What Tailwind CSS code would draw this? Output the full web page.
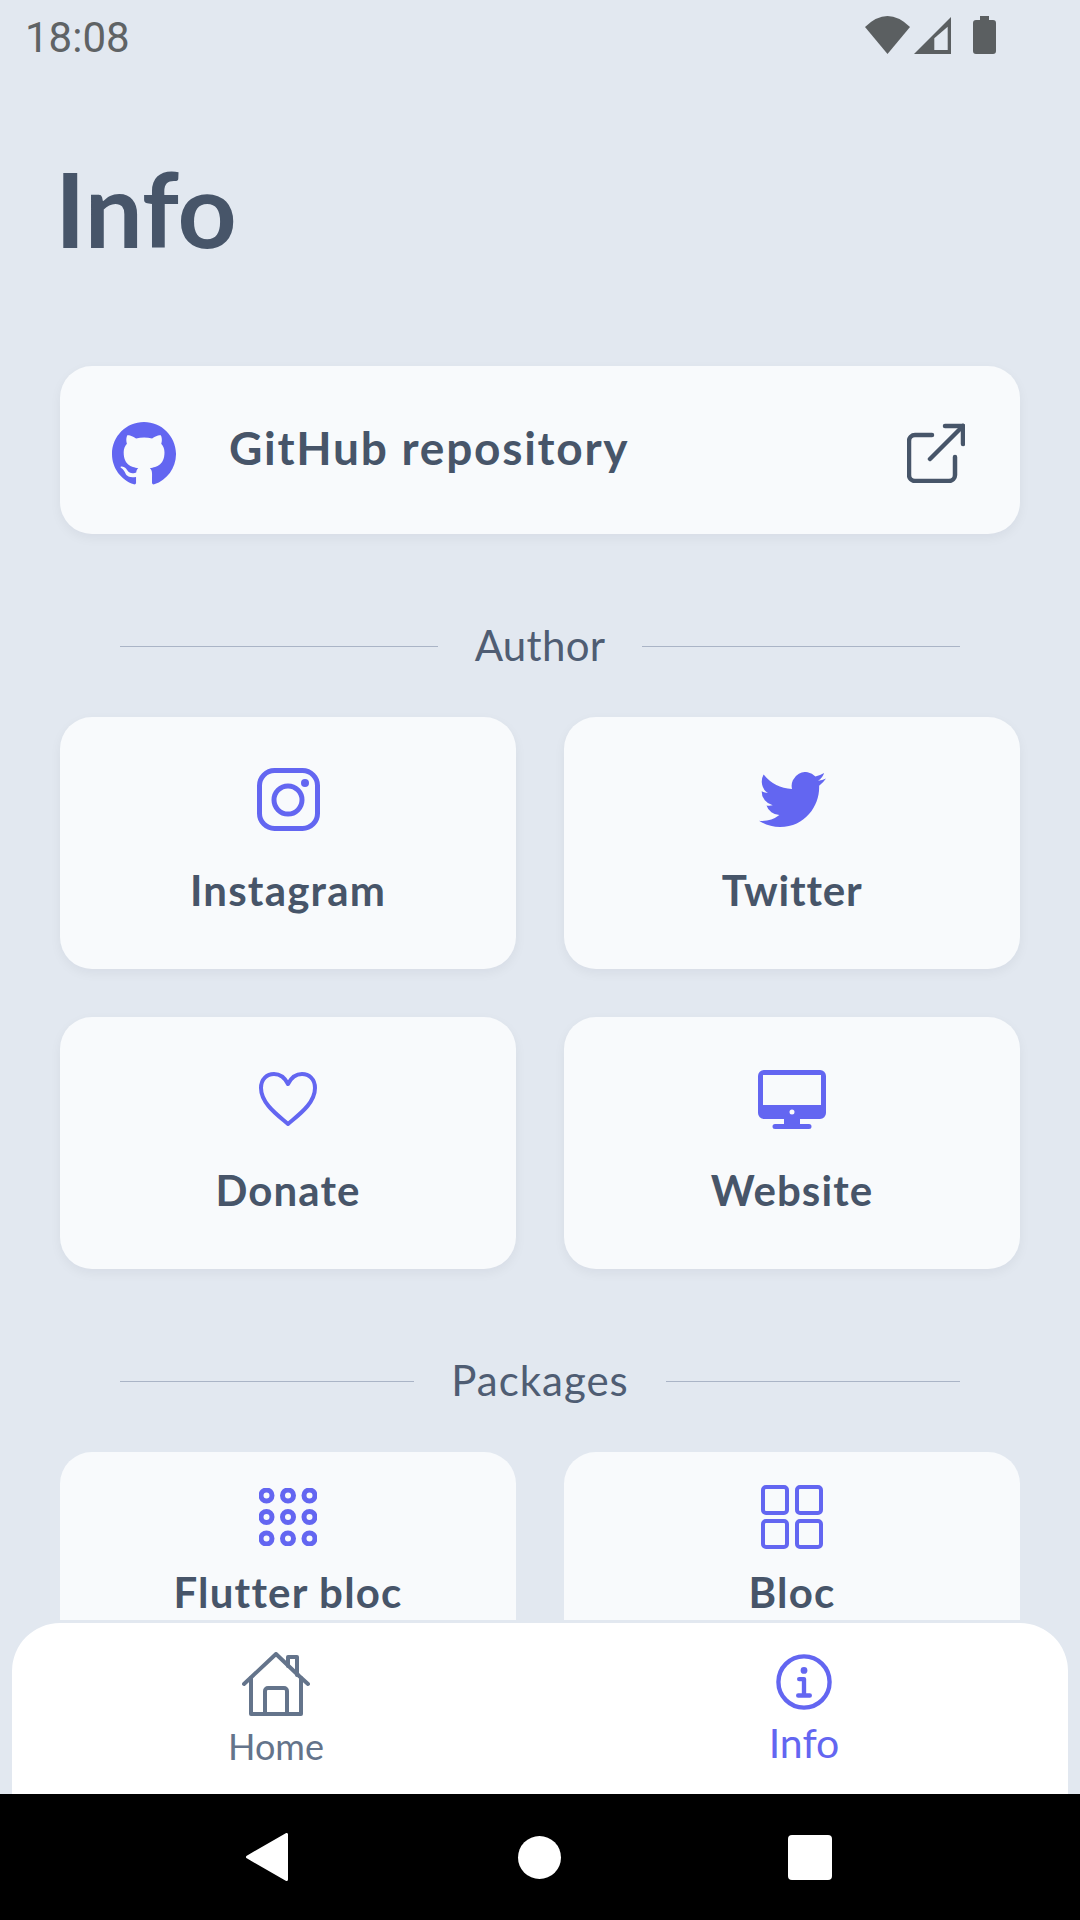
<!DOCTYPE html>
<html lang="en">
<head>
    <meta charset="UTF-8">
    <meta name="viewport" content="width=device-width, initial-scale=1.0">
    <title>Info</title>
    <script src="https://cdn.jsdelivr.net/npm/@tailwindcss/browser@4"></script>
</head>
<body class="bg-[#e2e8f0]">
<div class="w-[1080px] h-[1920px] flex flex-col overflow-hidden bg-[#e2e8f0] font-['Lato','Noto_Sans',sans-serif] text-[#475569]">

    <!-- status bar -->
    <div class="h-[72px] shrink-0 flex justify-between pl-[25px] pr-[84px] pt-[14px]">
        <span class="font-['Roboto',sans-serif] text-[42px] leading-[48px] text-[#5f6365]">18:08</span>
        <div class="flex items-start pt-[2px]">
            <svg width="45" height="38" viewBox="0 0 45 38" fill="#5b5f61"><path d="M22.5 38 0 11Q22.5-11 45 11Z"/></svg>
            <svg class="ml-[4px] mt-[1px]" width="37" height="37" viewBox="0 0 37 37"><path fill="#5b5f61" d="M0 37 37 0V37Z"/><path fill="#e2e8f0" d="M20.3 21.3 33.7 9.7V33H20.3Z"/></svg>
            <svg class="ml-[22px]" width="23" height="38" viewBox="0 0 23 38" fill="#5b5f61"><path d="M7 0h9v4h4a3 3 0 0 1 3 3v28a3 3 0 0 1-3 3H3a3 3 0 0 1-3-3V7a3 3 0 0 1 3-3h4Z"/></svg>
        </div>
    </div>

    <!-- scrolling content, cut off just above the nav -->
    <div class="h-[1548px] shrink-0 overflow-hidden px-[60px]">
        <h1 class="mt-[86px] -ml-[5px] h-[85px] text-[103px] leading-[100px] font-bold">Info</h1>

        <div class="mt-[123px] h-[168px] rounded-[32px] bg-[#f8fafc] shadow-[0_4px_12px_rgba(15,23,42,0.05)] flex items-center pl-[52px] pr-[55px]">
            <svg class="mt-[7px]" width="64" height="64" viewBox="2 2 20 20" fill="#6366f1"><path d="M12.001 2C6.47598 2 2.00098 6.475 2.00098 12C2.00098 16.425 4.86348 20.1625 8.83848 21.4875C9.33848 21.575 9.52598 21.275 9.52598 21.0125C9.52598 20.775 9.51348 19.9875 9.51348 19.15C7.00098 19.6125 6.35098 18.5375 6.15098 17.975C6.03848 17.6875 5.55098 16.8 5.12598 16.5625C4.77598 16.375 4.27598 15.9125 5.11348 15.9C5.90098 15.8875 6.46348 16.625 6.65098 16.925C7.55098 18.4375 8.98848 18.0125 9.56348 17.75C9.65098 17.1 9.91348 16.6625 10.201 16.4125C7.97598 16.1625 5.65098 15.3 5.65098 11.475C5.65098 10.3875 6.03848 9.4875 6.67598 8.7875C6.57598 8.5375 6.22598 7.5125 6.77598 6.1375C6.77598 6.1375 7.61348 5.875 9.52598 7.1625C10.326 6.9375 11.176 6.825 12.026 6.825C12.876 6.825 13.726 6.9375 14.526 7.1625C16.4385 5.8625 17.276 6.1375 17.276 6.1375C17.826 7.5125 17.476 8.5375 17.376 8.7875C18.0135 9.4875 18.401 10.375 18.401 11.475C18.401 15.3125 16.0635 16.1625 13.8385 16.4125C14.201 16.725 14.5135 17.325 14.5135 18.2625C14.5135 19.6 14.501 20.675 14.501 21.0125C14.501 21.275 14.6885 21.5875 15.1885 21.4875C19.259 20.1133 21.9999 16.2963 22.001 12C22.001 6.475 17.526 2 12.001 2Z"/></svg>
            <span class="ml-[53px] flex-1 text-[46px] leading-[50px] tracking-[1.75px] font-bold mb-[4px]">GitHub repository</span>
            <svg class="mt-[6px]" width="58" height="60" viewBox="0 0 58 60" fill="none" stroke="#475569" stroke-width="4.5" stroke-linecap="round" stroke-linejoin="round"><path d="M25 12H8a6 6 0 0 0-6 6v34a6 6 0 0 0 6 6h34a6 6 0 0 0 6-6V34"/><path d="M23 36 56 3"/><path d="M38 3h18v18"/></svg>
        </div>

        <!-- Author -->
        <div class="mt-[89px] mx-[60px] flex items-center justify-between h-[46px]">
            <div class="w-[318px] h-px bg-[#aab4c6]"></div>
            <span class="text-[42px] leading-[46px] tracking-[0.3px] text-[#4f5d73] -translate-y-px">Author</span>
            <div class="w-[318px] h-px bg-[#aab4c6]"></div>
        </div>

        <div class="mt-[48px] grid grid-cols-2 gap-[48px]">
            <div class="h-[252px] rounded-[32px] bg-[#f8fafc] shadow-[0_4px_12px_rgba(15,23,42,0.05)] flex flex-col items-center pt-[51px]">
                <svg width="63" height="63" viewBox="0 0 63 63" fill="none" stroke="#6366f1" stroke-width="5"><rect x="2.5" y="2.5" width="58" height="58" rx="15"/><circle cx="31" cy="32" r="14"/><circle cx="48" cy="15" r="4" fill="#6366f1" stroke="none"/></svg>
                <span class="mt-[35px] text-[42px] leading-[48px] tracking-[1.2px] font-bold">Instagram</span>
            </div>
            <div class="h-[252px] rounded-[32px] bg-[#f8fafc] shadow-[0_4px_12px_rgba(15,23,42,0.05)] flex flex-col items-center pt-[55px]">
                <svg width="67" height="55" viewBox="0 2 16 13" fill="#6366f1" preserveAspectRatio="none"><path d="M5.026 15c6.038 0 9.341-5.003 9.341-9.334 0-.14 0-.282-.006-.422A6.685 6.685 0 0 0 16 3.542a6.658 6.658 0 0 1-1.889.518 3.301 3.301 0 0 0 1.447-1.817 6.533 6.533 0 0 1-2.087.793A3.286 3.286 0 0 0 7.875 6.03a9.325 9.325 0 0 1-6.767-3.429 3.289 3.289 0 0 0 1.018 4.382A3.323 3.323 0 0 1 .64 6.575v.045a3.288 3.288 0 0 0 2.632 3.218 3.203 3.203 0 0 1-.865.115 3.23 3.23 0 0 1-.614-.057 3.283 3.283 0 0 0 3.067 2.277A6.588 6.588 0 0 1 .78 13.58a6.32 6.32 0 0 1-.78-.045A9.344 9.344 0 0 0 5.026 15z"/></svg>
                <span class="mt-[39px] text-[42px] leading-[48px] tracking-[0.8px] font-bold">Twitter</span>
            </div>
            <div class="h-[252px] rounded-[32px] bg-[#f8fafc] shadow-[0_4px_12px_rgba(15,23,42,0.05)] flex flex-col items-center pt-[55px]">
                <svg width="58" height="54" viewBox="0 0 58 54" fill="none" stroke="#6366f1" stroke-width="4" stroke-linejoin="round"><path d="M29 52C20 44 2 32 2 16 2 7 8 2 15 2c6 0 11 4 14 10 3-6 8-10 14-10 7 0 13 5 13 14 0 16-18 28-27 36Z"/></svg>
                <span class="mt-[40px] text-[42px] leading-[48px] tracking-[1.1px] font-bold">Donate</span>
            </div>
            <div class="h-[252px] rounded-[32px] bg-[#f8fafc] shadow-[0_4px_12px_rgba(15,23,42,0.05)] flex flex-col items-center pt-[53px]">
                <svg width="68" height="59" viewBox="0 0 68 59"><path fill="#6366f1" fill-rule="evenodd" d="M6 0h56a6 6 0 0 1 6 6v37a6 6 0 0 1-6 6H42v5h9a2.500 2.500 0 0 1 0 5H17a2.500 2.500 0 0 1 0-5h9v-5H6a6 6 0 0 1-6-6V6a6 6 0 0 1 6-6ZM5 5v30h58V5ZM34 39.500a2.500 2.500 0 1 0 0 5 2.500 2.500 0 0 0 0-5Z"/></svg>
                <span class="mt-[37px] text-[42px] leading-[48px] tracking-[1.1px] font-bold">Website</span>
            </div>
        </div>

        <!-- Packages -->
        <div class="mt-[89px] mx-[60px] flex items-center justify-between h-[46px]">
            <div class="w-[294px] h-px bg-[#aab4c6]"></div>
            <span class="text-[42px] leading-[46px] tracking-[1px] text-[#4f5d73] -translate-y-px">Packages</span>
            <div class="w-[294px] h-px bg-[#aab4c6]"></div>
        </div>

        <div class="mt-[48px] grid grid-cols-2 gap-[48px]">
            <div class="h-[252px] rounded-[32px] bg-[#f8fafc] flex flex-col items-center pt-[36px]">
                <svg width="58" height="58" viewBox="0 0 58 58" fill="none" stroke="#6366f1" stroke-width="5"><circle cx="7.500" cy="7.500" r="5.500"/><circle cx="29" cy="7.500" r="5.500"/><circle cx="50.500" cy="7.500" r="5.500"/><circle cx="7.500" cy="29" r="5.500"/><circle cx="29" cy="29" r="5.500"/><circle cx="50.500" cy="29" r="5.500"/><circle cx="7.500" cy="50.500" r="5.500"/><circle cx="29" cy="50.500" r="5.500"/><circle cx="50.500" cy="50.500" r="5.500"/></svg>
                <span class="mt-[22px] text-[42px] leading-[48px] tracking-[1.2px] font-bold">Flutter bloc</span>
            </div>
            <div class="h-[252px] rounded-[32px] bg-[#f8fafc] flex flex-col items-center pt-[33px]">
                <svg width="62" height="64" viewBox="0 0 62 64" fill="none" stroke="#6366f1" stroke-width="4"><rect x="2" y="2" width="24" height="26" rx="3"/><rect x="36" y="2" width="24" height="26" rx="3"/><rect x="2" y="36" width="24" height="26" rx="3"/><rect x="36" y="36" width="24" height="26" rx="3"/></svg>
                <span class="mt-[19px] text-[42px] leading-[48px] tracking-[1.2px] font-bold">Bloc</span>
            </div>
        </div>
    </div>

    <!-- bottom nav -->
    <div class="mt-[3px] mx-[12px] h-[171px] shrink-0 bg-white rounded-t-[48px] grid grid-cols-2">
        <div class="flex flex-col items-center pt-[29px] text-[#64748b]">
            <svg width="68" height="64" viewBox="0 0 68 64" fill="none" stroke="#64748b" stroke-width="4" stroke-linecap="round" stroke-linejoin="round"><path d="M2 32 34 2l22 21"/><path d="M66 32 56 23"/><path d="M46 14V5h9v18"/><path d="M9 26v36h50V26"/><path d="M23 62V39a3 3 0 0 1 3-3h16a3 3 0 0 1 3 3v23"/></svg>
            <span class="mt-[8px] text-[36px] leading-[44px]">Home</span>
        </div>
        <div class="flex flex-col items-center pt-[31px] text-[#6366f1]">
            <svg width="56" height="56" viewBox="0 0 58 58" fill="none"><circle cx="29" cy="29" r="26.500" stroke="#6366f1" stroke-width="4.500"/><circle cx="29" cy="17" r="3.500" fill="#6366f1"/><path d="M24 26h5v17M23 43h12" stroke="#6366f1" stroke-width="4.500" stroke-linecap="round" stroke-linejoin="round"/></svg>
            <span class="mt-[9px] text-[41px] leading-[48px]">Info</span>
        </div>
    </div>

    <!-- android nav bar -->
    <div class="h-[126px] shrink-0 bg-black flex items-center pl-[246px]">
        <svg width="42" height="48" viewBox="0 0 42 48" fill="#fff" stroke="#fff" stroke-width="3" stroke-linejoin="round"><path d="M40.500 1.500V46.500L1.500 24Z"/></svg>
        <div class="ml-[230px] w-[43px] h-[43px] rounded-full bg-white"></div>
        <div class="ml-[227px] w-[44px] h-[45px] rounded-[4px] bg-white"></div>
    </div>
</div>
</body>
</html>
